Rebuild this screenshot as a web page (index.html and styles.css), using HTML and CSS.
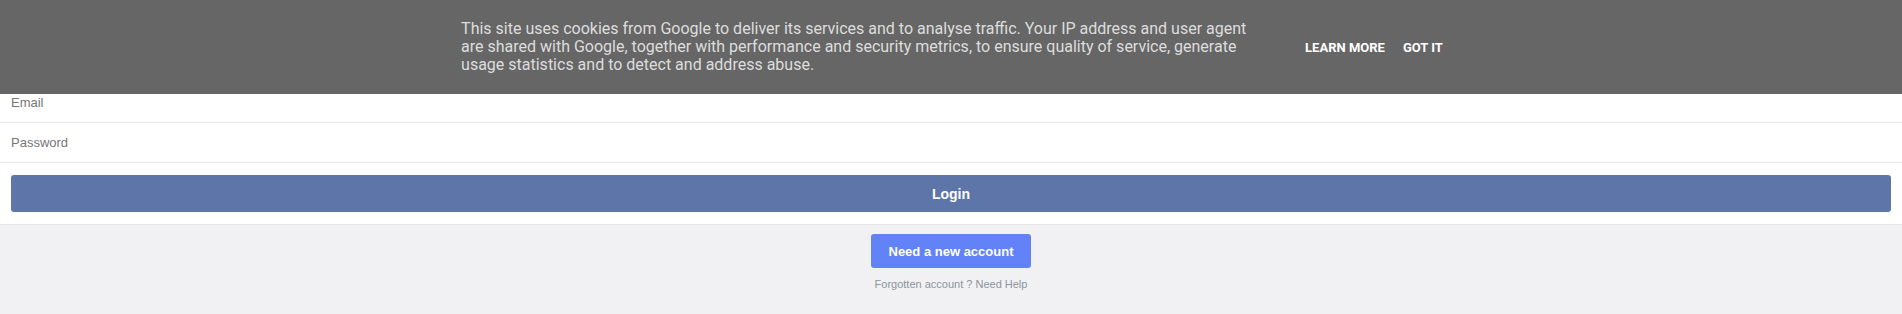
FILE: index.html
```html
<!DOCTYPE html>
<html lang="en">
<head>
<meta charset="utf-8">
<title>Login</title>
<link rel="stylesheet" href="styles.css">
</head>
<body>
<div class="cookie-bar">
  <div class="cookie-inner">
    <p class="cookie-text">This site uses cookies from Google to deliver its services and to analyse traffic. Your IP address and user agent are shared with Google, together with performance and security metrics, to ensure quality of service, generate usage statistics and to detect and address abuse.</p>
    <div class="cookie-buttons">
      <a class="cookie-btn" href="#">Learn more</a>
      <a class="cookie-btn" href="#">Got it</a>
    </div>
  </div>
</div>
<main class="page">
  <form class="login-form">
    <input class="field" type="email" placeholder="Email">
    <input class="field" type="password" placeholder="Password">
    <div class="login-wrap">
      <button class="login-btn" type="button">Login</button>
    </div>
  </form>
  <section class="extras">
    <button class="new-btn" type="button">Need a new account</button>
    <p class="help">Forgotten account ? Need Help</p>
  </section>
</main>
</body>
</html>
```

FILE: styles.css
```css
html, body {
  margin: 0;
  padding: 0;
}
body {
  background: #f1f1f3;
  font-family: "Liberation Sans", Arial, sans-serif;
  height: 314px;
  overflow: hidden;
}
.cookie-bar {
  position: fixed;
  top: 0;
  left: 0;
  right: 0;
  background: #666666;
  font-family: Roboto, "Liberation Sans", sans-serif;
  z-index: 10;
}
.cookie-inner {
  display: flex;
  justify-content: center;
  align-items: center;
  padding-left: 11px;
}
.cookie-text {
  width: 795px;
  margin: 20px;
  font-size: 16px;
  line-height: 18px;
  color: #dddddd;
}
.cookie-buttons {
  display: flex;
  margin: 20px;
}
.cookie-btn {
  margin: 0 9px;
  color: #ffffff;
  font-size: 13px;
  font-weight: bold;
  text-transform: uppercase;
  text-decoration: none;
  white-space: nowrap;
}
.page {
  padding-top: 83px;
}
.login-form {
  display: flex;
  flex-direction: column;
  background: #ffffff;
}
.field {
  display: block;
  box-sizing: border-box;
  width: 100%;
  height: 40px;
  margin: 0;
  padding: 0 11px;
  border: none;
  border-bottom: 1px solid #e5e5e5;
  outline: none;
  background: #ffffff;
  font-family: "Liberation Sans", Arial, sans-serif;
  font-size: 13px;
  color: #333;
}
.field::placeholder {
  color: #767676;
}
.login-wrap {
  padding: 12px 11px;
}
.login-btn {
  display: block;
  width: 100%;
  height: 37px;
  border: none;
  border-radius: 3px;
  background: #5d75a8;
  color: #ffffff;
  font-family: "Liberation Sans", Arial, sans-serif;
  font-size: 14px;
  font-weight: bold;
  padding: 0;
}
.extras {
  border-top: 1px solid #e5e5e5;
  background: #f1f1f3;
  display: flex;
  flex-direction: column;
  align-items: center;
  padding-top: 9px;
}
.new-btn {
  width: 160px;
  height: 34px;
  border: none;
  border-radius: 3px;
  background: #6282f7;
  color: #ffffff;
  font-family: "Liberation Sans", Arial, sans-serif;
  font-size: 13px;
  font-weight: bold;
  padding: 0;
}
.help {
  margin: 10px 0 0;
  font-size: 11px;
  color: #8d949e;
}
```
